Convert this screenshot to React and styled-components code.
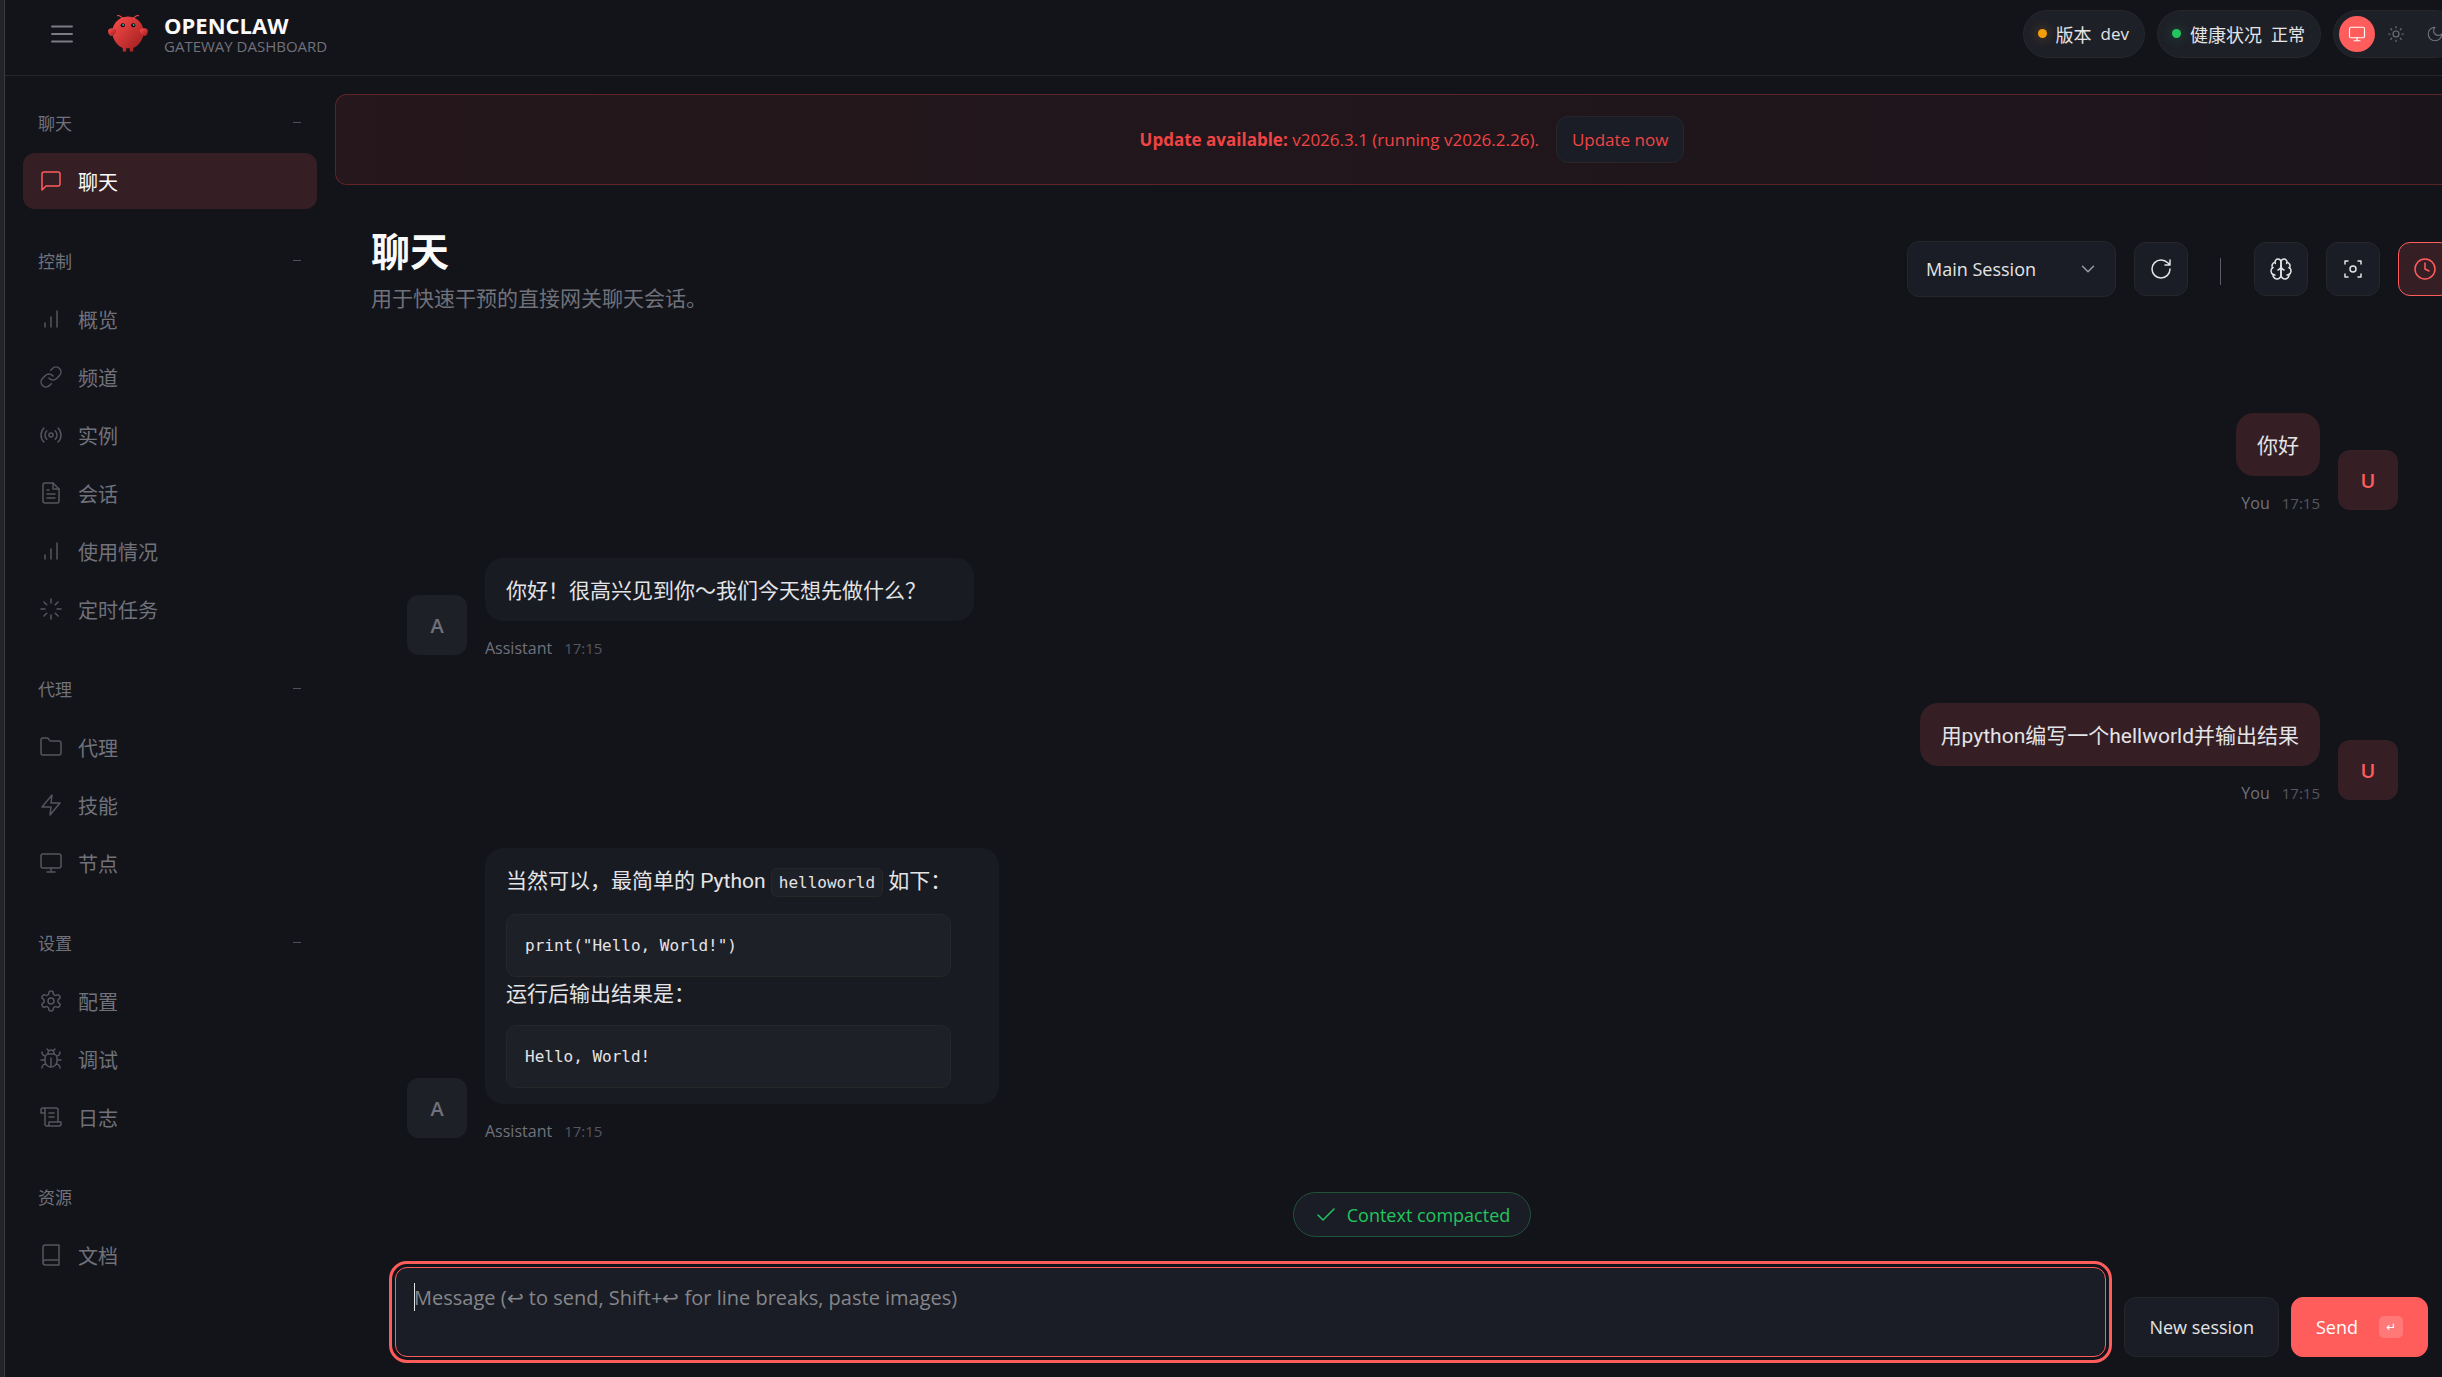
import React, { useState } from "react";
import styled, { createGlobalStyle, css } from "styled-components";

const GlobalStyle = createGlobalStyle`
  * {
    box-sizing: border-box;
  }

  body {
    margin: 0;
    overflow: hidden;
    background: #12141a;
    color: #e4e4e7;
    font-family: "Open Sans", "Noto Sans CJK SC", sans-serif;
    font-size: 18px;
  }

  button, select, textarea {
    font-family: inherit;
  }
`;

const Page = styled.div`
  height: 100vh;
  overflow: hidden;
  border-left: 4px solid #232228;
`;

// The dashboard is a little wider than the window and is cut off on the right.
const Shell = styled.div`
  display: flex;
  flex-direction: column;
  height: 100%;
  margin-right: -47px;
  border-left: 1px solid #3a393f;
`;

const Topbar = styled.header`
  display: flex;
  align-items: center;
  justify-content: space-between;
  height: 76px;
  padding: 0 30px 8px;
  border-bottom: 1px solid #27272a;
`;

const TopGroup = styled.div`
  display: flex;
  align-items: center;
  gap: ${(p) => p.$gap}px;
`;

const MenuButton = styled.button`
  display: flex;
  align-items: center;
  justify-content: center;
  width: 54px;
  height: 54px;
  padding: 0;
  border: 0;
  background: none;
  color: #7c7c84;
  cursor: pointer;
`;

const Brand = styled.div`
  display: flex;
  align-items: center;
  gap: 15px;
`;

const BrandText = styled.div`
  display: flex;
  flex-direction: column;
`;

const BrandTitle = styled.div`
  color: #fafafa;
  font-size: 22px;
  font-weight: 700;
  line-height: 24px;
`;

const BrandSub = styled.div`
  color: #71717a;
  font-size: 15px;
  line-height: 18px;
`;

const Pill = styled.div`
  display: flex;
  align-items: center;
  gap: 9px;
  height: 48px;
  padding: 0 15px 0 14px;
  border: 1px solid #27272a;
  border-radius: 24px;
  background: #1e2028;
  font-size: 17px;
`;

const PillLabel = styled.span`
  font-size: 18px;
`;

const Dot = styled.span`
  width: 9px;
  height: 9px;
  border-radius: 50%;
  background: ${(p) => p.$color};
  box-shadow: 0 0 12px ${(p) => p.$color}66;
`;

const ThemeSwitch = styled.div`
  display: flex;
  gap: 3px;
  padding: 5px;
  border: 1px solid #27272a;
  border-radius: 24px;
  background: #1e2028;
`;

const ThemeButton = styled.button`
  display: flex;
  align-items: center;
  justify-content: center;
  width: 36px;
  height: 36px;
  padding: 0;
  border: 0;
  border-radius: 50%;
  background: ${(p) => (p.$active ? "#ff5c5c" : "transparent")};
  color: ${(p) => (p.$active ? "#fff" : "#71717a")};
  cursor: pointer;
`;

const Body = styled.div`
  display: flex;
  flex: 1;
  min-height: 0;
`;

const Sidebar = styled.nav`
  display: flex;
  flex-direction: column;
  flex: none;
  gap: 34px;
  width: 330px;
  padding: 29px 18px 0;
`;

const NavGroup = styled.div`
  display: flex;
  flex-direction: column;
  gap: 2px;
`;

const NavLabel = styled.button`
  display: flex;
  align-items: center;
  justify-content: space-between;
  height: 34px;
  margin-bottom: 12px;
  padding: 0 16px 0 15px;
  border: 0;
  background: none;
  color: #71717a;
  font-size: 17px;
  cursor: pointer;
`;

const NavDash = styled.span`
  width: 8px;
  height: 1px;
  background: #505158;
`;

const NavItem = styled.a`
  display: flex;
  align-items: center;
  gap: 15px;
  height: 56px;
  padding: 0 16px;
  border-radius: 12px;
  color: #71717a;
  font-size: 20px;
  text-decoration: none;

  svg {
    opacity: 0.7;
  }

  ${(p) =>
    p.$active &&
    css`
      background: #351f24;
      color: #fafafa;

      svg {
        color: #ff5c5c;
        opacity: 1;
      }
    `}
`;

const Content = styled.main`
  display: flex;
  flex: 1;
  flex-direction: column;
  min-width: 0;
  padding: 18px 0 20px;
`;

const Banner = styled.div`
  display: flex;
  flex: none;
  align-items: center;
  justify-content: center;
  gap: 17px;
  height: 91px;
  border: 1px solid rgba(239, 68, 68, 0.3);
  border-radius: 12px;
  background: linear-gradient(90deg, #25171c, #1b151b);
  color: #ef4444;
  font-size: 17px;
`;

const buttonBase = css`
  display: flex;
  align-items: center;
  justify-content: center;
  border: 1px solid #27272a;
  border-radius: 12px;
  background: #1a1d25;
  color: #e4e4e7;
  cursor: pointer;
`;

const UpdateButton = styled.button`
  ${buttonBase}
  height: 47px;
  padding: 0 15px;
  color: #ef4444;
  font-size: 17px;
`;

const PageHeader = styled.div`
  display: flex;
  align-items: center;
  justify-content: space-between;
  margin: 37px 37px 0 36px;
`;

const PageTitle = styled.h1`
  margin: 0;
  color: #fafafa;
  font-size: 39px;
  font-weight: 700;
  line-height: 58px;
`;

const PageSub = styled.p`
  margin: 0;
  color: #71717a;
  font-size: 21px;
  line-height: 36px;
`;

const Controls = styled.div`
  display: flex;
  align-items: center;
  gap: 18px;
`;

const SelectWrap = styled.label`
  ${buttonBase}
  position: relative;
  width: 209px;
  height: 56px;

  svg {
    position: absolute;
    right: 16px;
    color: #a1a1aa;
    pointer-events: none;
  }
`;

const SessionSelect = styled.select`
  width: 100%;
  height: 100%;
  padding: 0 48px 0 18px;
  border: 0;
  border-radius: 12px;
  outline: none;
  appearance: none;
  background: transparent;
  color: #e4e4e7;
  font-size: 18px;
`;

const IconButton = styled.button`
  ${buttonBase}
  width: 54px;
  height: 54px;
  padding: 0;

  ${(p) =>
    p.$active &&
    css`
      border-color: #ff5c5c;
      background: #351f24;
      color: #ff5c5c;
    `}
`;

const Divider = styled.span`
  width: 1px;
  height: 27px;
  margin: 4px 15px 0 14px;
  background: #5b5c63;
`;

const Thread = styled.div`
  display: flex;
  flex: 1;
  flex-direction: column;
  gap: 42px;
  min-height: 0;
  padding: 97px 91px 0 72px;
`;

const MessageGroup = styled.div`
  display: flex;
  align-items: flex-end;
  flex-direction: ${(p) => (p.$user ? "row-reverse" : "row")};
  gap: 18px;
`;

const Avatar = styled.div`
  display: flex;
  align-items: center;
  justify-content: center;
  width: 60px;
  height: 60px;
  margin-bottom: 6px;
  border-radius: 12px;
  background: ${(p) => (p.$user ? "#351f24" : "#1e2028")};
  color: ${(p) => (p.$user ? "#ff5c5c" : "#71717a")};
  font-size: 20px;
  font-weight: 600;
`;

const MessageBody = styled.div`
  display: flex;
  flex-direction: column;
  align-items: ${(p) => (p.$user ? "flex-end" : "flex-start")};
`;

const Bubble = styled.div`
  padding: ${(p) => (p.$user ? "16px 21px 13px" : "16px 48px 13px 21px")};
  border-radius: 18px;
  background: ${(p) => (p.$user ? "#351f24" : "#181b22")};
  font-family: Roboto, "Noto Sans CJK SC", sans-serif;
  font-size: 21px;
  line-height: 34px;
`;

const Paragraph = styled.p`
  margin: 0;
`;

const InlineCode = styled.code`
  padding: 4px 7px;
  border: 1px solid #27272a;
  border-radius: 6px;
  background: #1e2028;
  font-family: "DejaVu Sans Mono", monospace;
  font-size: 16px;
`;

const CodeBlock = styled.pre`
  margin: 14px 0 0;
  padding: 18px;
  border: 1px solid #27272a;
  border-radius: 10px;
  background: #1e2028;
  font-family: "DejaVu Sans Mono", monospace;
  font-size: 16px;
  line-height: 25px;

  &:last-child {
    margin-bottom: 3px;
  }
`;

const Meta = styled.div`
  display: flex;
  gap: 12px;
  margin-top: 14px;
  color: #71717a;
  font-size: 16px;
  line-height: 26px;
`;

const MetaTime = styled.time`
  color: #55565e;
  font-size: 15px;
`;

const Toast = styled.div`
  display: flex;
  align-items: center;
  align-self: center;
  gap: 9px;
  height: 45px;
  margin-bottom: 30px;
  padding: 0 20px;
  border: 1px solid #1f5238;
  border-radius: 23px;
  background: #1a1d25;
  color: #22c55e;
  font-size: 18px;
`;

const Compose = styled.form`
  display: flex;
  align-items: flex-end;
  gap: 12px;
  margin: 0 61px 0 60px;
`;

const InputWrap = styled.div`
  position: relative;
  display: flex;
  flex: 1;
  margin-right: 6px;

  /* thin caret shown while the box is focused but still empty */
  &:has(textarea:focus:placeholder-shown)::before {
    content: "";
    position: absolute;
    top: 16px;
    left: 19px;
    width: 1px;
    height: 28px;
    background: #e4e4e7;
  }
`;

const MessageInput = styled.textarea`
  flex: 1;
  height: 90px;
  padding: 14px 18px;
  border: 1px solid #ff5c5c;
  border-radius: 12px;
  outline: 3px solid #ff5c5c;
  outline-offset: 3px;
  resize: none;
  background: #1a1d25;
  color: #e4e4e7;
  font-size: 20px;
  line-height: 32px;

  &::placeholder {
    color: #85868a;
  }

  &:placeholder-shown {
    caret-color: transparent;
  }
`;

const ComposeButton = styled.button`
  ${buttonBase}
  gap: 21px;
  height: 60px;
  padding: 0 24px;
  font-size: 18px;

  ${(p) =>
    p.$primary &&
    css`
      border-color: #ff5c5c;
      background: #ff5c5c;
      color: #fff;
    `}
`;

const Key = styled.kbd`
  display: flex;
  align-items: center;
  justify-content: center;
  width: 24px;
  height: 22px;
  border-radius: 5px;
  background: rgba(255, 255, 255, 0.18);
  font-family: "DejaVu Sans", sans-serif;
  font-size: 12px;
`;

const ICONS = {
  menu: <path d="M4 12h16M4 6h16M4 18h16" />,
  chat: <path d="M21 15a2 2 0 0 1-2 2H7l-4 4V5a2 2 0 0 1 2-2h14a2 2 0 0 1 2 2z" />,
  bars: <path d="M12 20V10M18 20V4M6 20v-4" />,
  link: (
    <>
      <path d="M10 13a5 5 0 0 0 7.54.54l3-3a5 5 0 0 0-7.07-7.07l-1.72 1.71" />
      <path d="M14 11a5 5 0 0 0-7.54-.54l-3 3a5 5 0 0 0 7.07 7.07l1.71-1.71" />
    </>
  ),
  radio: (
    <>
      <circle cx="12" cy="12" r="2" />
      <path d="M16.24 7.76a6 6 0 0 1 0 8.49m-8.48-.01a6 6 0 0 1 0-8.49m11.31-2.82a10 10 0 0 1 0 14.14m-14.14 0a10 10 0 0 1 0-14.14" />
    </>
  ),
  file: (
    <>
      <path d="M14 2H6a2 2 0 0 0-2 2v16a2 2 0 0 0 2 2h12a2 2 0 0 0 2-2V8z" />
      <path d="M14 2v6h6M16 13H8M16 17H8M10 9H8" />
    </>
  ),
  loader: (
    <path d="M12 2v4M12 18v4M4.93 4.93l2.83 2.83M16.24 16.24l2.83 2.83M2 12h4M18 12h4M4.93 19.07l2.83-2.83M16.24 7.76l2.83-2.83" />
  ),
  folder: (
    <path d="M4 20h16a2 2 0 0 0 2-2V8a2 2 0 0 0-2-2h-7.93a2 2 0 0 1-1.66-.9l-.82-1.2A2 2 0 0 0 7.93 3H4a2 2 0 0 0-2 2v13c0 1.1.9 2 2 2Z" />
  ),
  zap: <path d="M13 2 3 14h9l-1 8 10-12h-9l1-8z" />,
  monitor: (
    <>
      <rect x="2" y="3" width="20" height="14" rx="2" />
      <path d="M8 21h8M12 17v4" />
    </>
  ),
  settings: (
    <>
      <path d="M12.22 2h-.44a2 2 0 0 0-2 2v.18a2 2 0 0 1-1 1.73l-.43.25a2 2 0 0 1-2 0l-.15-.08a2 2 0 0 0-2.73.73l-.22.38a2 2 0 0 0 .73 2.73l.15.1a2 2 0 0 1 1 1.72v.51a2 2 0 0 1-1 1.74l-.15.09a2 2 0 0 0-.73 2.73l.22.38a2 2 0 0 0 2.73.73l.15-.08a2 2 0 0 1 2 0l.43.25a2 2 0 0 1 1 1.73V20a2 2 0 0 0 2 2h.44a2 2 0 0 0 2-2v-.18a2 2 0 0 1 1-1.73l.43-.25a2 2 0 0 1 2 0l.15.08a2 2 0 0 0 2.73-.73l.22-.39a2 2 0 0 0-.73-2.73l-.15-.08a2 2 0 0 1-1-1.74v-.5a2 2 0 0 1 1-1.74l.15-.09a2 2 0 0 0 .73-2.73l-.22-.38a2 2 0 0 0-2.73-.73l-.15.08a2 2 0 0 1-2 0l-.43-.25a2 2 0 0 1-1-1.73V4a2 2 0 0 0-2-2z" />
      <circle cx="12" cy="12" r="3" />
    </>
  ),
  bug: (
    <path d="m8 2 1.88 1.88M14.12 3.88 16 2M9 7.13v-1a3.003 3.003 0 1 1 6 0v1M12 20c-3.3 0-6-2.7-6-6v-3a4 4 0 0 1 4-4h4a4 4 0 0 1 4 4v3c0 3.3-2.7 6-6 6M12 20v-9M6.53 9C4.6 8.8 3 7.1 3 5M6 13H2M3 21c0-2.1 1.7-3.9 3.8-4M20.97 5c0 2.1-1.6 3.8-3.5 4M22 13h-4M17.2 17c2.1.1 3.8 1.9 3.8 4" />
  ),
  scroll: (
    <path d="M8 21h12a2 2 0 0 0 2-2v-2H10v2a2 2 0 1 1-4 0V5a2 2 0 1 0-4 0v3h4M19 17V5a2 2 0 0 0-2-2H4M15 8h-5M15 12h-5" />
  ),
  book: (
    <path d="M4 19.5v-15A2.5 2.5 0 0 1 6.5 2H20v20H6.5a2.5 2.5 0 0 1 0-5H20" />
  ),
  sun: (
    <>
      <circle cx="12" cy="12" r="4" />
      <path d="M12 2v2M12 20v2M4.93 4.93l1.41 1.41M17.66 17.66l1.41 1.41M2 12h2M20 12h2M6.34 17.66l-1.41 1.41M19.07 4.93l-1.41 1.41" />
    </>
  ),
  moon: <path d="M12 3a6 6 0 0 0 9 9 9 9 0 1 1-9-9Z" />,
  chevron: <path d="m6 9 6 6 6-6" />,
  refresh: (
    <path d="M21 12a9 9 0 1 1-9-9c2.52 0 4.93 1 6.74 2.74L21 8M21 3v5h-5" />
  ),
  brain: (
    <>
      <path d="M12 5a3 3 0 1 0-5.997.125 4 4 0 0 0-2.526 5.77 4 4 0 0 0 .556 6.588A4 4 0 1 0 12 18Z" />
      <path d="M12 5a3 3 0 1 1 5.997.125 4 4 0 0 1 2.526 5.77 4 4 0 0 1-.556 6.588A4 4 0 1 1 12 18Z" />
      <path d="M15 13a4.5 4.5 0 0 1-3-4 4.5 4.5 0 0 1-3 4M17.599 6.5a3 3 0 0 0 .399-1.375M6.003 5.125A3 3 0 0 0 6.401 6.5M3.477 10.896a4 4 0 0 1 .585-.396M19.938 10.5a4 4 0 0 1 .585.396M6 18a4 4 0 0 1-1.967-.516M19.967 17.484A4 4 0 0 1 18 18" />
    </>
  ),
  focus: (
    <>
      <path d="M4 7V4h3M20 7V4h-3M4 17v3h3M20 17v3h-3" />
      <circle cx="12" cy="12" r="3" />
    </>
  ),
  clock: (
    <>
      <circle cx="12" cy="12" r="10" />
      <path d="M12 6v6l4 2" />
    </>
  ),
  check: <path d="M20 6 9 17l-5-5" />,
};

const Icon = ({ name, size = 24 }) => (
  <svg
    width={size}
    height={size}
    viewBox="0 0 24 24"
    fill="none"
    stroke="currentColor"
    strokeWidth="1.5"
    strokeLinecap="round"
    strokeLinejoin="round"
    aria-hidden="true"
  >
    {ICONS[name]}
  </svg>
);

const Logo = () => (
  <svg width="42" height="42" viewBox="0 0 120 120" fill="none" aria-hidden="true">
    <defs>
      <linearGradient id="claw" x1="0%" y1="0%" x2="100%" y2="100%">
        <stop offset="0%" stopColor="#ff4d4d" />
        <stop offset="100%" stopColor="#991b1b" />
      </linearGradient>
    </defs>
    <path
      d="M60 10C30 10 15 35 15 55s15 40 30 45v10h10v-10s5 2 10 0v10h10v-10c15-5 30-25 30-45S90 10 60 10Z"
      fill="url(#claw)"
    />
    <path d="M20 45C5 40 0 50 5 60s15 5 20-5c3-7 0-10-5-10Z" fill="url(#claw)" />
    <path d="M100 45c15-5 20 5 15 15s-15 5-20-5c-3-7 0-10 5-10Z" fill="url(#claw)" />
    <path d="M45 15Q35 5 30 8M75 15Q85 5 90 8" stroke="#ff4d4d" strokeWidth="3" strokeLinecap="round" />
    <circle cx="45" cy="35" r="6" fill="#050810" />
    <circle cx="75" cy="35" r="6" fill="#050810" />
    <circle cx="46" cy="34" r="2.5" fill="#00e5cc" />
    <circle cx="76" cy="34" r="2.5" fill="#00e5cc" />
  </svg>
);

const NAV = [
  { label: "聊天", items: [["chat", "聊天"]] },
  {
    label: "控制",
    items: [
      ["bars", "概览"],
      ["link", "频道"],
      ["radio", "实例"],
      ["file", "会话"],
      ["bars", "使用情况"],
      ["loader", "定时任务"],
    ],
  },
  {
    label: "代理",
    items: [
      ["folder", "代理"],
      ["zap", "技能"],
      ["monitor", "节点"],
    ],
  },
  {
    label: "设置",
    items: [
      ["settings", "配置"],
      ["bug", "调试"],
      ["scroll", "日志"],
    ],
  },
  { label: "资源", fixed: true, items: [["book", "文档"]] },
];

const THEMES = [
  ["monitor", "System"],
  ["sun", "Light"],
  ["moon", "Dark"],
];

const Message = ({ user, time, children }) => (
  <MessageGroup $user={user}>
    <Avatar $user={user}>{user ? "U" : "A"}</Avatar>
    <MessageBody $user={user}>
      <Bubble $user={user}>{children}</Bubble>
      <Meta>
        <span>{user ? "You" : "Assistant"}</span>
        <MetaTime>{time}</MetaTime>
      </Meta>
    </MessageBody>
  </MessageGroup>
);

const App = () => {
  const [theme, setTheme] = useState("monitor");
  const [draft, setDraft] = useState("");

  const handleSubmit = (e) => {
    e.preventDefault();
    setDraft("");
  };

  return (
    <Page>
      <GlobalStyle />
      <Shell>
        <Topbar>
          <TopGroup $gap={18}>
            <MenuButton type="button" aria-label="Toggle menu">
              <Icon name="menu" size={30} />
            </MenuButton>
            <Brand>
              <Logo />
              <BrandText>
                <BrandTitle>OPENCLAW</BrandTitle>
                <BrandSub>GATEWAY DASHBOARD</BrandSub>
              </BrandText>
            </Brand>
          </TopGroup>
          <TopGroup $gap={12}>
            <Pill>
              <Dot $color="#f59e0b" />
              <PillLabel>版本</PillLabel>
              <span>dev</span>
            </Pill>
            <Pill>
              <Dot $color="#22c55e" />
              <PillLabel>健康状况</PillLabel>
              <span>正常</span>
            </Pill>
            <ThemeSwitch>
              {THEMES.map(([icon, label]) => (
                <ThemeButton
                  key={icon}
                  type="button"
                  aria-label={label}
                  $active={theme === icon}
                  onClick={() => setTheme(icon)}
                >
                  <Icon name={icon} size={18} />
                </ThemeButton>
              ))}
            </ThemeSwitch>
          </TopGroup>
        </Topbar>

        <Body>
          <Sidebar>
            {NAV.map((group) => (
              <NavGroup key={group.label}>
                <NavLabel type="button">
                  <span>{group.label}</span>
                  {!group.fixed && <NavDash />}
                </NavLabel>
                {group.items.map(([icon, label]) => (
                  <NavItem key={label} href="#" $active={icon === "chat"}>
                    <Icon name={icon} />
                    {label}
                  </NavItem>
                ))}
              </NavGroup>
            ))}
          </Sidebar>

          <Content>
            <Banner>
              <span>
                <strong>Update available:</strong> v2026.3.1 (running v2026.2.26).
              </span>
              <UpdateButton type="button">Update now</UpdateButton>
            </Banner>

            <PageHeader>
              <div>
                <PageTitle>聊天</PageTitle>
                <PageSub>用于快速干预的直接网关聊天会话。</PageSub>
              </div>
              <Controls>
                <SelectWrap>
                  <SessionSelect aria-label="Session">
                    <option>Main Session</option>
                  </SessionSelect>
                  <Icon name="chevron" size={22} />
                </SelectWrap>
                <IconButton type="button" aria-label="Refresh">
                  <Icon name="refresh" />
                </IconButton>
                <Divider />
                <IconButton type="button" aria-label="Toggle thinking">
                  <Icon name="brain" />
                </IconButton>
                <IconButton type="button" aria-label="Focus mode">
                  <Icon name="focus" />
                </IconButton>
                <IconButton type="button" aria-label="Cron sessions" $active>
                  <Icon name="clock" />
                </IconButton>
              </Controls>
            </PageHeader>

            <Thread>
              <Message user time="17:15">
                <Paragraph>你好</Paragraph>
              </Message>
              <Message time="17:15">
                <Paragraph>你好！很高兴见到你～我们今天想先做什么？</Paragraph>
              </Message>
              <Message user time="17:15">
                <Paragraph>用python编写一个hellworld并输出结果</Paragraph>
              </Message>
              <Message time="17:15">
                <Paragraph>
                  当然可以，最简单的 Python <InlineCode>helloworld</InlineCode> 如下：
                </Paragraph>
                <CodeBlock>print("Hello, World!")</CodeBlock>
                <Paragraph>运行后输出结果是：</Paragraph>
                <CodeBlock>Hello, World!</CodeBlock>
              </Message>
            </Thread>

            <Toast role="status">
              <Icon name="check" />
              Context compacted
            </Toast>

            <Compose onSubmit={handleSubmit}>
              <InputWrap>
                <MessageInput
                  aria-label="Message"
                  autoFocus
                  placeholder="Message (↩ to send, Shift+↩ for line breaks, paste images)"
                  value={draft}
                  onChange={(e) => setDraft(e.target.value)}
                />
              </InputWrap>
              <ComposeButton type="button">New session</ComposeButton>
              <ComposeButton type="submit" $primary>
                Send
                <Key>↵</Key>
              </ComposeButton>
            </Compose>
          </Content>
        </Body>
      </Shell>
    </Page>
  );
};

export default App;
